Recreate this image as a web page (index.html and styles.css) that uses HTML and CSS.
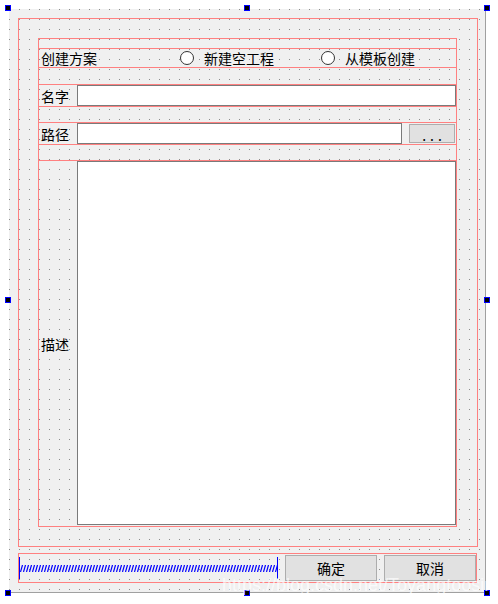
FILE: index.html
```html
<!DOCTYPE html>
<html>
<head>
<meta charset="utf-8">
<link rel="stylesheet" href="styles.css">
</head>
<body>
<div class="page">
  <div class="form">
    <div class="group">
      <div class="inner">
        <div class="row row-scheme">
          <span class="label">创建方案</span>
          <span class="radio"><span class="radio-dot"></span><span>新建空工程</span></span>
          <span class="radio"><span class="radio-dot"></span><span>从模板创建</span></span>
        </div>
        <div class="row row-field row-name">
          <span class="label">名字</span>
          <div class="edit name-edit"></div>
        </div>
        <div class="row row-field row-path">
          <span class="label">路径</span>
          <div class="edit path-edit"></div>
          <div class="btn browse">...</div>
        </div>
        <div class="row row-desc">
          <span class="label">描述</span>
          <div class="edit text-edit"></div>
        </div>
      </div>
    </div>
    <div class="button-row">
      <div class="spacer">
        <svg width="257" height="7" viewBox="0 0 257 7">
          <defs>
            <pattern id="zig" width="3" height="7" patternUnits="userSpaceOnUse">
              <path d="M0.5 7 L2.5 0" stroke="#0000ff" stroke-width="1.2" fill="none"/>
            </pattern>
          </defs>
          <rect x="0" y="0" width="257" height="7" fill="url(#zig)"/>
        </svg>
      </div>
      <div class="btn action">确定</div>
      <div class="btn action">取消</div>
    </div>
  </div>
  <span class="handle h-tl"></span>
  <span class="handle h-tm"></span>
  <span class="handle h-tr"></span>
  <span class="handle h-ml"></span>
  <span class="handle h-mr"></span>
  <span class="handle h-bl"></span>
  <span class="handle h-bm"></span>
  <span class="handle h-br"></span>
  <div class="watermark">https://blog.csdn.net/Toyangtoosimple</div>
</div>
</body>
</html>
```
FILE: styles.css
```css
* { box-sizing: border-box; }
html, body { margin: 0; padding: 0; background: #ffffff; }
body {
  font-family: "Noto Sans CJK SC", "Noto Sans", sans-serif;
  font-size: 14px;
  color: #000;
}
.page {
  position: relative;
  width: 498px;
  height: 604px;
  padding: 9px 0 0 9px;
  background: #ffffff;
  overflow: hidden;
}
.form {
  width: 477px;
  height: 584px;
  border-right: 1px solid #a0a0a0;
  border-bottom: 1px solid #a0a0a0;
  background-color: #f0f0f0;
  background-image: conic-gradient(at 1px 1px, transparent 75%, #8c8c8c 0);
  background-size: 10px 10px;
  padding: 9px 0 0 9px;
  display: flex;
  flex-direction: column;
}
.group {
  width: 460px;
  height: 529px;
  border: 1px solid #ff8080;
  padding: 19px 0 0 19px;
}
.inner {
  width: 419px;
  height: 489px;
  outline: 1px solid #ff8080;
  outline-offset: -1px;
  padding-top: 10px;
  display: flex;
  flex-direction: column;
}
.row {
  width: 419px;
  border: 1px solid #ff8080;
}
.label {
  padding-left: 2px;
  line-height: 16px;
  white-space: nowrap;
}
.row-scheme {
  height: 20px;
  display: grid;
  grid-template-columns: 141px 141px 1fr;
  align-items: center;
}
.radio {
  display: flex;
  align-items: center;
  line-height: 16px;
  white-space: nowrap;
}
.radio-dot {
  width: 14px;
  height: 14px;
  border-radius: 50%;
  border: 1px solid #333333;
  background: #ffffff;
  margin-right: 10px;
}
.row-field {
  height: 23px;
  display: flex;
  align-items: stretch;
}
.row-field .label,
.row-desc .label {
  width: 38px;
  display: flex;
  align-items: center;
}
.row-name { margin-top: 16px; }
.row-path { margin-top: 15px; }
.edit {
  background: #ffffff;
  border: 1px solid #7a7a7a;
}
.name-edit { width: 379px; }
.path-edit { width: 325px; }
.btn {
  background: #e1e1e1;
  border: 1px solid #adadad;
  display: flex;
  align-items: center;
  justify-content: center;
  line-height: 16px;
}
.browse {
  width: 46px;
  height: 19px;
  margin-left: 7px;
  align-self: center;
  letter-spacing: 4px;
  padding-left: 4px;
  padding-top: 2px;
}
.row-desc {
  margin-top: 15px;
  height: 367px;
  display: flex;
}
.text-edit {
  width: 379px;
  height: 364px;
}
.button-row {
  margin-top: 6px;
  width: 459px;
  height: 30px;
  border: 1px solid #ff8080;
  display: flex;
  align-items: center;
  gap: 7px;
}
.spacer {
  width: 259px;
  height: 22px;
  border-left: 1px solid #0000ff;
  border-right: 1px solid #0000ff;
  display: flex;
  align-items: center;
}
.spacer svg { display: block; }
.action {
  width: 92px;
  height: 26px;
}
.handle {
  position: absolute;
  width: 6px;
  height: 6px;
  border: 1px solid #0000ff;
  background: #000000;
}
.h-tl { left: 5px; top: 5px; }
.h-tm { left: 244px; top: 5px; }
.h-tr { left: 484px; top: 5px; }
.h-ml { left: 5px; top: 297px; }
.h-mr { left: 484px; top: 297px; }
.h-bl { left: 5px; top: 590px; }
.h-bm { left: 244px; top: 590px; }
.h-br { left: 484px; top: 590px; }
.watermark {
  position: absolute;
  left: 222px;
  top: 575px;
  font-family: "Liberation Sans", Arial, sans-serif;
  font-size: 18px;
  line-height: 20px;
  color: rgba(255, 255, 255, 0.7);
  white-space: nowrap;
  pointer-events: none;
}
```
